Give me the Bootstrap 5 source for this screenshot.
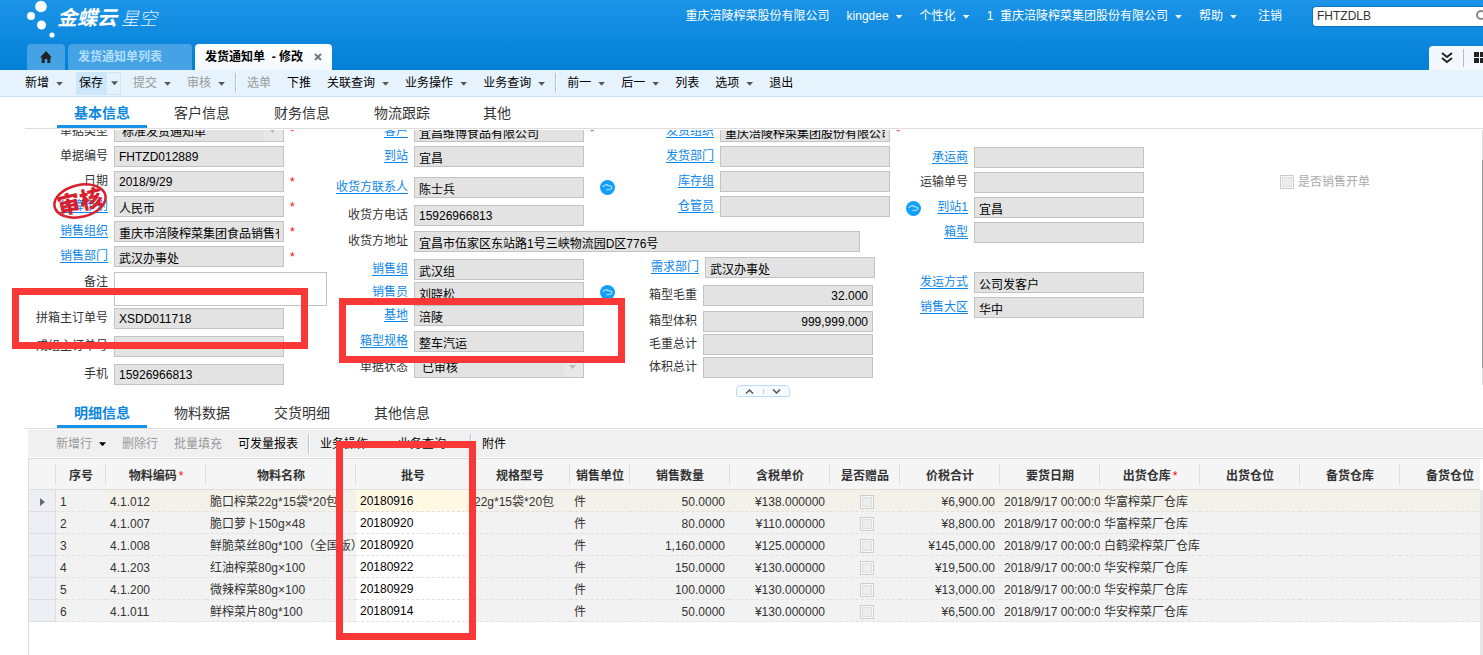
<!DOCTYPE html>
<html lang="zh-CN">
<head>
<meta charset="utf-8">
<meta name="viewport" content="width=device-width, initial-scale=1">
<title>发货通知单 - 修改</title>
<link href="https://cdn.jsdelivr.net/npm/bootstrap@5.3.0/dist/css/bootstrap.min.css" rel="stylesheet">
<style>
body{font-family:"Liberation Sans","Noto Sans CJK SC",sans-serif;font-size:12px;line-height:16px;color:#333;background:#fff;overflow:hidden}
button{border:0;background:none;padding:0;color:inherit;white-space:nowrap}
.page{min-height:100vh;overflow:hidden}
/* header */
.topbar{background:linear-gradient(#1c94e8,#0080d6);min-height:70px;color:#fff}
.topbar a,.topbar button{color:#fff;text-decoration:none;white-space:nowrap}
.brand-row{height:44px}
.brand-name{font-size:20px;line-height:20px;font-weight:700;font-style:italic}
.brand-sub{font-size:18px;line-height:20px;font-weight:300;font-style:italic;opacity:.85;margin-left:4px}
.tri{display:inline-block;width:7px;height:4px;margin-left:7px;background:#555;clip-path:polygon(0 0,100% 0,50% 100%);vertical-align:middle}
.topbar .tri{background:#fff}
.user-nav{gap:17px;height:32px}
.finder{width:171px;height:21px;border:1px solid #0b74bd;border-right:0;border-radius:4px 0 0 4px;background:#fff;overflow:hidden;margin-left:13px}
.finder input{border:0;outline:0;width:160px;padding:0 4px;font-size:12px;color:#333;background:none}
.win-tabs{padding-left:27px;gap:3px}
.win-tab{height:26px;border-radius:4px 4px 0 0;background:#45a2e5;font-weight:700;padding:0 10px}
.win-tab.home-tab{width:38px}
.topbar .win-tab.wide-tab{width:124px;color:#b2dfff}
.win-tab.current{background:linear-gradient(#fff,#f2f9fe);color:#000;width:137px}
.side-tools{height:24px;width:54px;background:#f2f8fd;border-radius:4px 0 0 0}
.side-rule{width:1px;height:18px;background:#bbb;margin:0 10px}
/* toolbars */
.tools{color:#000}
.tools button{padding:0 8px;line-height:24px}
.tools button:disabled{color:#999}
.tools .rule-v{width:2px;height:20px;margin:0 2px;background:linear-gradient(90deg,#a9c5ea 50%,#fff 50%)}
.main-tools{background:#e6f3fc;border-bottom:1px solid #cce0fc;height:27px;padding-left:17px}
.main-tools .split{background:linear-gradient(90deg,#cce7fa 31px,#e3f2fc 31px);box-shadow:inset 0 0 0 1px #cce7fa;margin:0 4px 0 5px;padding:0 3px;line-height:23px}
.grid-tools{background:#f0f0f0;height:27px;margin:1px 0 1px 28px;padding-left:20px}
/* section tabs */
.sect{margin-left:25px;padding-left:32px;border-bottom:1px solid #ddd;gap:10px;height:32px}
.sect button{min-width:80px;padding:4px 17px 0;font-size:14px;line-height:24px;height:31px;color:#333;border-bottom:3px solid transparent}
.sect button.on{color:#0d87e0;font-weight:700;border-bottom-color:#1993e8}
/* form */
.pane{overflow:hidden;margin-top:1px}
.pane-in{margin-top:-9px}
.fcol{flex:none}
.fa{width:300px}.fb{width:306px}.fb-low{width:289px;margin-top:2px}.fc{width:254px}.fmid{width:560px}.fd{width:420px;padding-top:26px}.fe{padding-top:50px}
.fld{height:21px;margin-bottom:4px;white-space:nowrap}
.sp2{margin-bottom:2px}.sp5{margin-bottom:5px}.sp7{margin-bottom:7px}.sp10{margin-bottom:10px}.sp29{margin-bottom:29px}
.cap{width:108px;margin-right:6px;text-align:right;flex:none;line-height:20px;align-self:flex-start}
.cap a{color:#0d87e9;text-decoration:underline 1px;text-underline-offset:2px}
.box{width:170px;height:21px;flex:none;border:1px solid #c3c3c3;border-radius:0;background:#e3e3e3;color:#000;padding:1px 4px 0;font-size:12px;line-height:16px;outline:0}
.box.pick{appearance:none;opacity:1;padding-left:7px;background:#e3e3e3 linear-gradient(#e8e8e8,#e8e8e8) right/19px 100% no-repeat}
.pickwrap .tri{position:absolute;right:8px;top:8px;background:#bbb}
.box.addr{width:446px}
.box.memo{width:213px;height:34px;background:#fff;resize:none}
.req{color:#f00;margin-left:6px;line-height:12px}
.cloud{width:15px;height:15px;flex:none}
.tick{appearance:none;width:14px;height:14px;margin:0;border:1px solid #ccc;background:#eceded;box-shadow:inset 0 0 0 1px #fafafa,inset 0 0 0 2px #dcdedf;display:inline-block;vertical-align:middle}
.off{color:#aaa}
.track{width:1px;background:#ddd}
.track div{height:208px;margin-top:30px;background:#999}
.fold{padding-left:43px;height:12px}
.fold div{width:54px;border:1px solid #b9dcf4;border-radius:5px 5px 2px 2px;background:#f5fbff}
.fold button{flex:1;line-height:0}
.fold button+button{border-left:1px solid #ccc}
.fold svg{display:inline-block;vertical-align:top}
/* annotations */
.frame{position:absolute;border:7px solid #fb3838;z-index:5;pointer-events:none}
.frame-order{left:12px;top:288px;width:296px;height:61px}
.frame-base{left:339px;top:298px;width:286px;height:65px}
.frame-lot{left:336px;top:441px;width:140px;height:199px}
.stamp{position:absolute;left:52px;top:180px;z-index:4}
/* grid */
.gridbox{margin-left:28px;border-left:1px solid #ddd;border-top:1px solid #ddd;overflow:hidden;min-height:197px}
.gridclip{overflow:hidden;flex:1;min-width:0}
.items{table-layout:fixed;width:1471px;border-collapse:separate;border-spacing:0;color:#333}
.c27{width:27px}.c50{width:50px}.c60{width:60px}.c70{width:70px}.c100{width:100px}.c114{width:114px}.c150{width:150px}
.items th{height:31px;background:#f5f5f5 linear-gradient(#ddd,#ddd) right/1px 20px no-repeat;border-bottom:1px solid #ddd;text-align:center;padding:3px 0 0;white-space:nowrap;overflow:hidden}
.items th .req{margin-left:2px;font-weight:400}
.items td{height:22px;padding:2px 4px 0;line-height:16px;background:#f2f2f2;border-bottom:1px dashed #e0e0e0;white-space:nowrap;overflow:hidden}
.items td:first-child{background:#eeeff5;border-right:1px solid #ddd;border-bottom:1px solid #dcdde4;text-align:center}
.items td.lot{background:#fff;color:#000;padding-top:0}
.items .sel td:nth-child(n+3){background:#f4f1ea}
.items .sel td.lot{background:#fff8e2}
.items td.num{text-align:right;padding-right:5px}
.items td.chk{text-align:center;padding:0 0 0 4px}
.items td.chk .tick{vertical-align:top;margin-top:2px}
.vbar{width:3px;background:#e8e8e8;margin-top:31px}
</style>
</head>
<body>
<svg width="0" height="0" class="position-absolute" aria-hidden="true">
<symbol id="cloud" viewBox="0 0 15 15"><circle cx="7.500" cy="7.500" r="7.500" fill="#12a0fa"/><path d="M2.800 6.800C4.500 4.300 7 4.300 8.300 5.700c2-.2 3.700.8 3.500 2.300-.2 1.300-1.500 1.700-5.300 1.500" fill="none" stroke="#a5dcff" stroke-width="1.300"/></symbol>
</svg>
<div class="page position-relative">
<header class="topbar">
  <div class="brand-row d-flex align-items-start">
    <svg width="57" height="40" viewBox="0 0 57 40" fill="#fff" aria-hidden="true"><circle cx="41" cy="6.500" r="5.800"/><circle cx="31" cy="16" r="4"/><circle cx="41.500" cy="25" r="4.500"/><circle cx="52" cy="35" r="2.600"/></svg>
    <div class="pt-2 text-nowrap pe-3"><span class="brand-name">金蝶云</span><span class="brand-sub">星空</span></div>
    <nav class="user-nav d-flex align-items-center ms-auto">
      <span class="text-nowrap">重庆涪陵榨菜股份有限公司</span>
      <button>kingdee<span class="tri"></span></button>
      <button>个性化<span class="tri"></span></button>
      <button>1&nbsp; 重庆涪陵榨菜集团股份有限公司<span class="tri"></span></button>
      <button>帮助<span class="tri"></span></button>
      <a href="#" class="ms-1">注销</a>
      <div class="finder d-flex align-items-center"><input type="text" value="FHTZDLB" aria-label="搜索"><svg width="14" height="14" viewBox="0 0 14 14" class="flex-shrink-0"><circle cx="8" cy="6" r="4" fill="none" stroke="#888" stroke-width="2"/></svg></div>
    </nav>
  </div>
  <div class="win-tabs d-flex align-items-end">
    <a href="#" class="win-tab home-tab d-flex align-items-center justify-content-center" aria-label="首页"><svg width="12" height="12" viewBox="0 0 12 12" fill="#222"><path d="M6 0 12 6.500H10.300V12H7.300V8H4.700V12H1.700V6.500H0z"/></svg></a>
    <a href="#" class="win-tab wide-tab d-flex align-items-center">发货通知单列表</a>
    <div class="win-tab current d-flex align-items-center justify-content-between"><span class="text-nowrap">发货通知单&nbsp; - 修改</span><button class="d-flex" aria-label="关闭"><svg width="8" height="8" viewBox="0 0 8 8" stroke="#777" stroke-width="2"><path d="M1 1 7 7M7 1 1 7"/></svg></button></div>
    <div class="side-tools ms-auto d-flex align-items-center">
      <button class="ms-2 ps-1 d-flex" aria-label="展开"><svg width="12" height="12" viewBox="0 0 12 12" fill="none" stroke="#222" stroke-width="1.800"><path d="M1 1 6 5 11 1M1 6 6 10 11 6"/></svg></button>
      <span class="side-rule flex-shrink-0"></span>
      <svg class="flex-shrink-0" width="11" height="12" viewBox="0 0 11 12" fill="#222"><path d="M0 0h5v5H0zM6 0h5v5H6zM0 6h5v5H0zM6 6h5v5H6z"/></svg>
    </div>
  </div>
</header>
<div class="tools main-tools d-flex align-items-center">
  <button>新增<span class="tri"></span></button>
  <button class="split">保存<span class="tri ms-2"></span></button>
  <button disabled>提交<span class="tri"></span></button>
  <button disabled>审核<span class="tri"></span></button>
  <span class="rule-v"></span>
  <button disabled>选单</button>
  <button>下推</button>
  <button>关联查询<span class="tri"></span></button>
  <button>业务操作<span class="tri"></span></button>
  <button>业务查询<span class="tri"></span></button>
  <span class="rule-v"></span>
  <button>前一<span class="tri"></span></button>
  <button>后一<span class="tri"></span></button>
  <button>列表</button>
  <button>选项<span class="tri"></span></button>
  <button>退出</button>
</div>
<div class="sect d-flex align-items-end">
  <button class="on">基本信息</button><button>客户信息</button><button>财务信息</button><button>物流跟踪</button><button>其他</button>
</div>
<div class="pane d-flex">
<form class="pane-in d-flex flex-grow-1">
  <div class="fcol fa">
    <div class="fld d-flex align-items-center"><label class="cap" for="a1">单据类型</label><div class="pickwrap position-relative"><select id="a1" class="box pick" disabled><option>标准发货通知单</option></select><span class="tri"></span></div><span class="req">*</span></div>
    <div class="fld d-flex"><label class="cap" for="a2">单据编号</label><input id="a2" class="box" readonly value="FHTZD012889"></div>
    <div class="fld d-flex align-items-center"><label class="cap" for="a3">日期</label><input id="a3" class="box" readonly value="2018/9/29"><span class="req">*</span></div>
    <div class="fld d-flex align-items-center"><label class="cap" for="a4"><a href="#">结算币别</a></label><input id="a4" class="box" readonly value="人民币"><span class="req">*</span></div>
    <div class="fld d-flex align-items-center"><label class="cap" for="a5"><a href="#">销售组织</a></label><input id="a5" class="box" readonly value="重庆市涪陵榨菜集团食品销售有限公司"><span class="req">*</span></div>
    <div class="fld sp5 d-flex align-items-center"><label class="cap" for="a6"><a href="#">销售部门</a></label><input id="a6" class="box" readonly value="武汉办事处"><span class="req">*</span></div>
    <div class="fld sp2 h-auto d-flex"><label class="cap" for="a7">备注</label><textarea id="a7" class="box memo"></textarea></div>
    <div class="fld sp7 d-flex"><label class="cap" for="a8">拼箱主订单号</label><input id="a8" class="box" readonly value="XSDD011718"></div>
    <div class="fld sp7 d-flex"><label class="cap" for="a9">成组主订单号</label><input id="a9" class="box" readonly></div>
    <div class="fld mb-0 d-flex"><label class="cap" for="a10">手机</label><input id="a10" class="box" readonly value="15926966813"></div>
  </div>
  <div class="fcol fmid">
    <div class="d-flex">
      <div class="fcol fb">
        <div class="fld d-flex align-items-center"><label class="cap" for="b1"><a href="#">客户</a></label><input id="b1" class="box" readonly value="宜昌维博食品有限公司"><span class="req">*</span></div>
        <div class="fld sp10 d-flex"><label class="cap" for="b2"><a href="#">到站</a></label><input id="b2" class="box" readonly value="宜昌"></div>
        <div class="fld sp7 d-flex align-items-center"><label class="cap" for="b3"><a href="#">收货方联系人</a></label><input id="b3" class="box" readonly value="陈士兵"><svg class="cloud ms-3"><use href="#cloud"/></svg></div>
        <div class="fld sp5 d-flex"><label class="cap" for="b4">收货方电话</label><input id="b4" class="box" readonly value="15926966813"></div>
      </div>
      <div class="fcol fc">
        <div class="fld d-flex align-items-center"><label class="cap" for="c1"><a href="#">发货组织</a></label><input id="c1" class="box" readonly value="重庆涪陵榨菜集团股份有限公司"><span class="req">*</span></div>
        <div class="fld d-flex"><label class="cap" for="c2"><a href="#">发货部门</a></label><input id="c2" class="box" readonly></div>
        <div class="fld d-flex"><label class="cap" for="c3"><a href="#">库存组</a></label><input id="c3" class="box" readonly></div>
        <div class="fld d-flex"><label class="cap" for="c4"><a href="#">仓管员</a></label><input id="c4" class="box" readonly></div>
      </div>
    </div>
    <div class="fld sp5 d-flex"><label class="cap" for="b5">收货方地址</label><input id="b5" class="box addr" readonly value="宜昌市伍家区东站路1号三峡物流园D区776号"></div>
    <div class="d-flex">
      <div class="fcol fb-low">
        <div class="fld sp2 d-flex"><label class="cap" for="b6"><a href="#">销售组</a></label><input id="b6" class="box" readonly value="武汉组"></div>
        <div class="fld sp2 d-flex align-items-center"><label class="cap" for="b7"><a href="#">销售员</a></label><input id="b7" class="box" readonly value="刘晓松"><svg class="cloud ms-3"><use href="#cloud"/></svg></div>
        <div class="fld sp5 d-flex"><label class="cap" for="b8"><a href="#">基地</a></label><input id="b8" class="box" readonly value="涪陵"></div>
        <div class="fld sp5 d-flex"><label class="cap" for="b9"><a href="#">箱型规格</a></label><input id="b9" class="box" readonly value="整车汽运"></div>
        <div class="fld mb-0 d-flex"><label class="cap" for="b10">单据状态</label><div class="pickwrap position-relative"><select id="b10" class="box pick" disabled><option>已审核</option></select><span class="tri"></span></div></div>
      </div>
      <div class="fcol">
        <div class="fld sp7 d-flex" style="margin-left:2px"><label class="cap" for="c6"><a href="#">需求部门</a></label><input id="c6" class="box" readonly value="武汉办事处"></div>
        <div class="fld sp5 d-flex"><label class="cap" for="c7">箱型毛重</label><input id="c7" class="box text-end" readonly value="32.000"></div>
        <div class="fld sp2 d-flex"><label class="cap" for="c8">箱型体积</label><input id="c8" class="box text-end" readonly value="999,999.000"></div>
        <div class="fld sp2 d-flex"><label class="cap" for="c9">毛重总计</label><input id="c9" class="box" readonly></div>
        <div class="fld mb-0 d-flex"><label class="cap" for="c10">体积总计</label><input id="c10" class="box" readonly></div>
      </div>
    </div>
  </div>
  <div class="fcol fd">
    <div class="fld d-flex"><label class="cap" for="d1"><a href="#">承运商</a></label><input id="d1" class="box" readonly></div>
    <div class="fld d-flex"><label class="cap" for="d2">运输单号</label><input id="d2" class="box" readonly></div>
    <div class="fld d-flex"><div class="cap d-flex justify-content-end"><svg class="cloud me-3 mt-1"><use href="#cloud"/></svg><label for="d3"><a href="#">到站1</a></label></div><input id="d3" class="box" readonly value="宜昌"></div>
    <div class="fld sp29 d-flex"><label class="cap" for="d4"><a href="#">箱型</a></label><input id="d4" class="box" readonly></div>
    <div class="fld d-flex"><label class="cap" for="d5"><a href="#">发运方式</a></label><input id="d5" class="box" readonly value="公司发客户"></div>
    <div class="fld d-flex"><label class="cap" for="d6"><a href="#">销售大区</a></label><input id="d6" class="box" readonly value="华中"></div>
  </div>
  <div class="fcol fe">
    <div class="fld d-flex align-items-center gap-1"><input type="checkbox" class="tick" id="e1" disabled><label for="e1" class="off">是否销售开单</label></div>
  </div>
</form>
<div class="track flex-shrink-0"><div></div></div>
</div>
<div class="fold d-flex justify-content-center"><div class="d-flex align-items-center">
  <button aria-label="收起"><svg width="9" height="5" viewBox="0 0 9 5" fill="none" stroke="#555" stroke-width="1.500"><path d="M1 4.500 4.500 1 8 4.500"/></svg></button>
  <button aria-label="展开"><svg width="9" height="5" viewBox="0 0 9 5" fill="none" stroke="#555" stroke-width="1.500"><path d="M1 .5 4.500 4 8 .5"/></svg></button>
</div></div>
<div class="sect d-flex align-items-end">
  <button class="on">明细信息</button><button>物料数据</button><button>交货明细</button><button>其他信息</button>
</div>
<div class="tools grid-tools d-flex align-items-center">
  <button disabled>新增行<span class="tri bg-black"></span></button>
  <button disabled>删除行</button>
  <button disabled>批量填充</button>
  <button>可发量报表</button>
  <span class="rule-v"></span>
  <button>业务操作<span class="tri"></span></button>
  <button>业务查询<span class="tri"></span></button>
  <span class="rule-v"></span>
  <button>附件</button>
</div>
<div class="gridbox d-flex">
<div class="gridclip">
<table class="items">
<colgroup><col class="c27"><col class="c50"><col class="c100"><col class="c150"><col class="c114"><col class="c100"><col class="c60"><col class="c100"><col class="c100"><col class="c70"><col class="c100"><col class="c100"><col class="c100"><col class="c100"><col class="c100"><col class="c100"></colgroup>
<thead><tr><th></th><th>序号</th><th>物料编码<span class="req">*</span></th><th>物料名称</th><th>批号</th><th>规格型号</th><th>销售单位</th><th>销售数量</th><th>含税单价</th><th>是否赠品</th><th>价税合计</th><th>要货日期</th><th>出货仓库<span class="req">*</span></th><th>出货仓位</th><th>备货仓库</th><th>备货仓位</th></tr></thead>
<tbody>
<tr class="sel"><td><svg width="5" height="8" viewBox="0 0 5 8" fill="#667"><path d="M0 0 5 4 0 8z"/></svg></td><td>1</td><td>4.1.012</td><td>脆口榨菜22g*15袋*20包</td><td class="lot">20180916</td><td>22g*15袋*20包</td><td>件</td><td class="num">50.0000</td><td class="num">¥138.000000</td><td class="chk"><input type="checkbox" class="tick" disabled aria-label="是否赠品"></td><td class="num">¥6,900.00</td><td>2018/9/17 00:00:00</td><td>华富榨菜厂仓库</td><td></td><td></td><td></td></tr>
<tr><td></td><td>2</td><td>4.1.007</td><td>脆口萝卜150g×48</td><td class="lot">20180920</td><td></td><td>件</td><td class="num">80.0000</td><td class="num">¥110.000000</td><td class="chk"><input type="checkbox" class="tick" disabled aria-label="是否赠品"></td><td class="num">¥8,800.00</td><td>2018/9/17 00:00:00</td><td>华富榨菜厂仓库</td><td></td><td></td><td></td></tr>
<tr><td></td><td>3</td><td>4.1.008</td><td>鲜脆菜丝80g*100（全国版）</td><td class="lot">20180920</td><td></td><td>件</td><td class="num">1,160.0000</td><td class="num">¥125.000000</td><td class="chk"><input type="checkbox" class="tick" disabled aria-label="是否赠品"></td><td class="num">¥145,000.00</td><td>2018/9/17 00:00:00</td><td>白鹤梁榨菜厂仓库</td><td></td><td></td><td></td></tr>
<tr><td></td><td>4</td><td>4.1.203</td><td>红油榨菜80g×100</td><td class="lot">20180922</td><td></td><td>件</td><td class="num">150.0000</td><td class="num">¥130.000000</td><td class="chk"><input type="checkbox" class="tick" disabled aria-label="是否赠品"></td><td class="num">¥19,500.00</td><td>2018/9/17 00:00:00</td><td>华安榨菜厂仓库</td><td></td><td></td><td></td></tr>
<tr><td></td><td>5</td><td>4.1.200</td><td>微辣榨菜80g×100</td><td class="lot">20180929</td><td></td><td>件</td><td class="num">100.0000</td><td class="num">¥130.000000</td><td class="chk"><input type="checkbox" class="tick" disabled aria-label="是否赠品"></td><td class="num">¥13,000.00</td><td>2018/9/17 00:00:00</td><td>华安榨菜厂仓库</td><td></td><td></td><td></td></tr>
<tr><td></td><td>6</td><td>4.1.011</td><td>鲜榨菜片80g*100</td><td class="lot">20180914</td><td></td><td>件</td><td class="num">50.0000</td><td class="num">¥130.000000</td><td class="chk"><input type="checkbox" class="tick" disabled aria-label="是否赠品"></td><td class="num">¥6,500.00</td><td>2018/9/17 00:00:00</td><td>华安榨菜厂仓库</td><td></td><td></td><td></td></tr>
</tbody>
</table>
</div>
<div class="vbar"></div>
</div>
<svg class="stamp" width="58" height="42" viewBox="0 0 58 42"><g transform="rotate(-13 28 21)"><ellipse cx="28" cy="21" rx="26" ry="16" fill="none" stroke="#d71f2e" stroke-width="2.500"/><text x="28" y="30" text-anchor="middle" font-size="23" font-weight="900" fill="#d71f2e">审核</text></g></svg>
<div class="frame frame-order"></div>
<div class="frame frame-base"></div>
<div class="frame frame-lot"></div>
</div>
<script src="https://cdn.jsdelivr.net/npm/bootstrap@5.3.0/dist/js/bootstrap.bundle.min.js"></script>
</body>
</html>
